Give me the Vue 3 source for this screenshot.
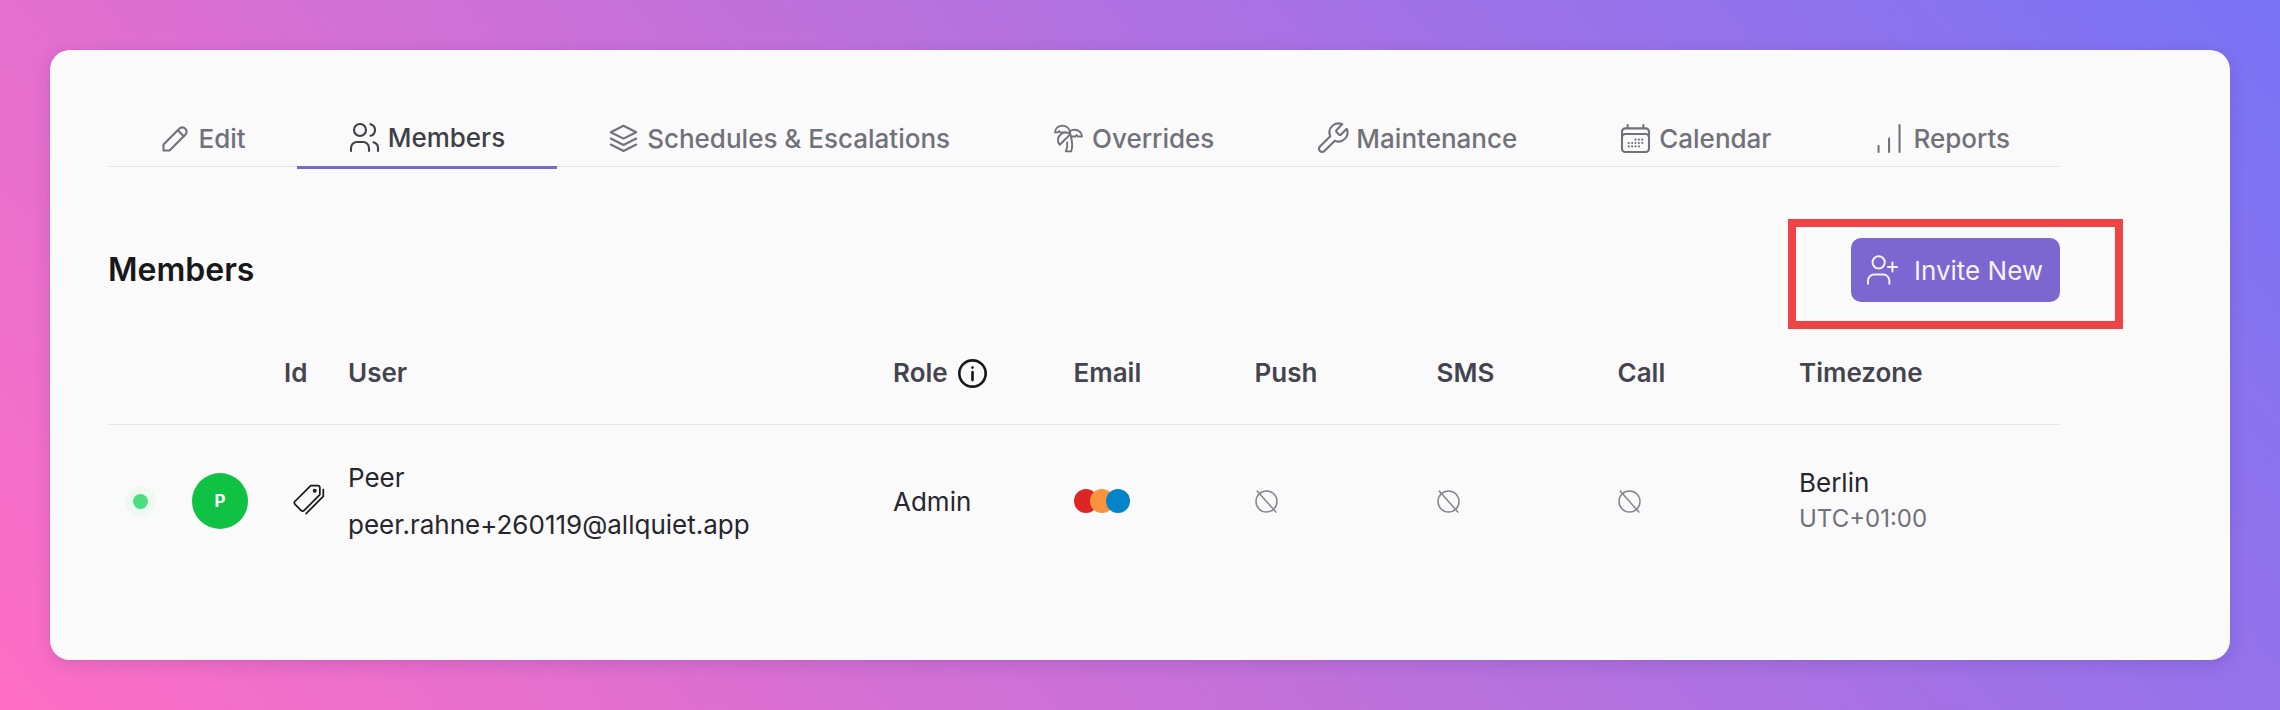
<script setup>
const tabs = [
  { label: 'Edit', icon: 'edit' },
  { label: 'Members', icon: 'users', active: true },
  { label: 'Schedules & Escalations', icon: 'stack' },
  { label: 'Overrides', icon: 'palm' },
  { label: 'Maintenance', icon: 'wrench' },
  { label: 'Calendar', icon: 'calendar' },
  { label: 'Reports', icon: 'bars' },
]

const icons = {
  edit: ['M4 20h4L18.5 9.5a2.83 2.83 0 1 0-4-4L4 16v4', 'M13.5 6.5l4 4'],
  users: ['M5 7a4 4 0 1 0 8 0a4 4 0 1 0-8 0', 'M3 21v-2a4 4 0 0 1 4-4h4a4 4 0 0 1 4 4v2', 'M16 3.13a4 4 0 0 1 0 7.75', 'M21 21v-2a4 4 0 0 0-3-3.85'],
  stack: ['M12 3.5l-8.5 4.3 8.5 4.3 8.5-4.3-8.5-4.3', 'M3.5 12l8.5 4.3 8.5-4.3', 'M3.5 16l8.5 4.3 8.5-4.3'],
  palm: [
    'M13 8c0-2.76-2.46-5-5.5-5S2 5.24 2 8h2l1-1 1 1h4',
    'M13 7.14A5.82 5.82 0 0 1 16.5 6c3.04 0 5.5 2.24 5.5 5h-3l-1-1-1 1h-3',
    'M5.89 9.71c-2.15 2.15-2.3 5.47-.35 7.43l4.24-4.25.7-.7.71-.71 2.12-2.12c-1.95-1.96-5.27-1.8-7.42.35',
    'M11 15.5c.5 2.5-.17 4.5-1 6.5h4c2-5.5-.5-12-1-14',
  ],
  wrench: ['M14.7 6.3a1 1 0 0 0 0 1.4l1.6 1.6a1 1 0 0 0 1.4 0l3.77-3.77a6 6 0 0 1-7.94 7.94l-6.91 6.91a2.12 2.12 0 0 1-3-3l6.91-6.91a6 6 0 0 1 7.94-7.94l-3.76 3.76z'],
  calendar: [
    'M6.75 3v2.25M17.25 3v2.25M3 18.75V7.5a2.25 2.25 0 0 1 2.25-2.25h13.5A2.25 2.25 0 0 1 21 7.5v11.25m-18 0A2.25 2.25 0 0 0 5.25 21h13.5A2.25 2.25 0 0 0 21 18.75m-18 0v-7.5A2.25 2.25 0 0 1 5.25 9h13.5A2.25 2.25 0 0 1 21 11.25v7.5',
    'M12 12.75h.01M12 15h.01M12 17.25h.01M9.75 15h.01M9.75 17.25h.01M7.5 15h.01M7.5 17.25h.01M14.25 12.75h.01M14.25 15h.01M14.25 17.25h.01M16.5 12.75h.01M16.5 15h.01',
  ],
  bars: ['M4.7 21v-4', 'M11.7 21v-9', 'M18.7 21V3'],
  userPlus: ['M6 7a4 4 0 1 0 8 0a4 4 0 1 0-8 0', 'M3 21v-2a4 4 0 0 1 4-4h6a4 4 0 0 1 4 4v2', 'M19 7v6M16 10h6'],
  slash: ['M3 12a9 9 0 1 0 18 0a9 9 0 1 0-18 0', 'M4 3l16 18'],
}

const headers = ['', '', 'Id', 'User', 'Role', 'Email', 'Push', 'SMS', 'Call', 'Timezone']
const channels = ['Push', 'SMS', 'Call']
</script>

<template>
  <div class="page">
    <main class="card">
      <nav class="tabs">
        <a v-for="tab in tabs" :key="tab.label" class="tab" :class="{ active: tab.active }">
          <svg class="tab-icon" :viewBox="tab.icon === 'palm' ? '2 3 20 19' : '3 3 18 18'">
            <path v-for="d in icons[tab.icon]" :key="d" :d="d" />
          </svg>
          {{ tab.label }}
        </a>
      </nav>

      <header class="title-row">
        <h1>Members</h1>
        <div class="invite-wrap">
          <button class="invite">
            <svg class="invite-icon" viewBox="3 3 19 18">
              <path v-for="d in icons.userPlus" :key="d" :d="d" />
            </svg>
            Invite New
          </button>
          <span class="highlight"></span>
        </div>
      </header>

      <div class="table head">
        <div v-for="(h, i) in headers" :key="i" class="th">
          {{ h }}
          <svg v-if="h === 'Role'" class="info" viewBox="1 1 22 22">
            <circle cx="12" cy="12" r="10" />
            <path d="M12 11v6" />
            <circle class="info-dot" cx="12" cy="7.5" r="1" />
          </svg>
        </div>
      </div>

      <div class="table row">
        <div class="status"><span class="status-dot"></span></div>
        <div><span class="avatar">P</span></div>
        <div>
          <svg class="tag" viewBox="3 3 28 28">
            <path d="M18.5 3.5h6a2 2 0 0 1 2 2v6L12.8 25.2a2 2 0 0 1-2.8 0l-5.2-5.2a2 2 0 0 1 0-2.8z" />
            <circle cx="22" cy="8" r="1" />
            <path d="M29.5 7v6L14.5 28" />
          </svg>
        </div>
        <div class="user">
          <div>Peer</div>
          <div>peer.rahne+260119@allquiet.app</div>
        </div>
        <div>Admin</div>
        <div class="dots">
          <span class="red"></span>
          <span class="orange"></span>
          <span class="blue"></span>
        </div>
        <div v-for="c in channels" :key="c">
          <svg class="off" viewBox="3 3 18 18">
            <path v-for="d in icons.slash" :key="d" :d="d" />
          </svg>
        </div>
        <div class="tz">
          <div>Berlin</div>
          <div class="utc">UTC+01:00</div>
        </div>
      </div>
    </main>
  </div>
</template>

<style>
html,
body {
  margin: 0;
}
</style>

<style scoped>
.page {
  box-sizing: border-box;
  width: 2280px;
  height: 710px;
  padding: 50px;
  background: linear-gradient(50deg, #ff6ec4, #7873f5);
  font-family: Inter, 'Liberation Sans', sans-serif;
  overflow: hidden;
}

.card {
  box-sizing: border-box;
  height: 610px;
  padding: 0 170px 0 58px;
  background: #fafafa;
  border-radius: 20px;
  box-shadow: 0 4px 16px rgba(60, 40, 120, 0.18);
}

.tabs {
  display: flex;
  height: 116px;
  align-items: flex-end;
  border-bottom: 1px solid #e4e4e7;
}

.tab {
  display: flex;
  align-items: center;
  gap: 10px;
  box-sizing: border-box;
  height: 50px;
  margin-bottom: -1px;
  padding: 0 51.5px 8px;
  color: #71717a;
  font-size: 26px;
  font-weight: 500;
  white-space: nowrap;
}

.tab.active {
  color: #3f3f46;
  border-bottom: 3px solid #7c66d0;
  margin-bottom: -3px;
  height: 52px;
}

.tab-icon {
  width: 27px;
  height: 27px;
  margin-left: 2px;
  overflow: visible;
  fill: none;
  stroke: currentColor;
  stroke-width: 1.4;
  stroke-linecap: round;
  stroke-linejoin: round;
}

.title-row {
  display: flex;
  justify-content: space-between;
  align-items: center;
  height: 64px;
  margin-top: 71px;
}

h1 {
  margin: -2px 0 0;
  color: #18181b;
  font-size: 32px;
  font-weight: 600;
}

.invite-wrap {
  position: relative;
}

.invite {
  display: flex;
  align-items: center;
  gap: 17px;
  box-sizing: border-box;
  width: 209px;
  height: 64px;
  padding: 0 17px;
  color: #f4f2ff;
  background: #7c66d0;
  border: 0;
  border-radius: 10px;
  font: 400 26px Inter, sans-serif;
  white-space: nowrap;
}

.invite-icon {
  width: 29px;
  height: 28px;
  flex: none;
  overflow: visible;
  fill: none;
  stroke: currentColor;
  stroke-width: 1.3;
  stroke-linecap: round;
  stroke-linejoin: round;
}

.highlight {
  position: absolute;
  top: -19px;
  left: -63px;
  width: 335px;
  height: 110px;
  box-sizing: border-box;
  border: 8px solid #ef4444;
  pointer-events: none;
}

.table {
  display: grid;
  grid-template-columns: 84px 92px 64px 545px 180.5px 181px 182px 181px 181.5px 1fr;
  align-items: center;
}

.head {
  height: 88px;
  margin-top: 34px;
  color: #44444f;
  font-size: 26px;
  font-weight: 600;
  border-bottom: 1px solid #e4e4e7;
}

.th {
  display: flex;
  align-items: center;
  gap: 10px;
  padding-bottom: 16px;
}

.info {
  width: 29px;
  height: 29px;
  margin-top: 3px;
  fill: none;
  stroke: #18181b;
  stroke-width: 2;
  stroke-linecap: round;
}

.info-dot {
  fill: #18181b;
  stroke: none;
}

.row {
  height: 152px;
  color: #26262e;
  font-size: 26px;
}

.row > div {
  display: flex;
  align-items: center;
}

.row > .user,
.row > .tz {
  flex-direction: column;
  align-items: flex-start;
}

.status {
  padding-left: 25px;
}

.status-dot {
  width: 15px;
  height: 15px;
  background: #4ade80;
  border-radius: 50%;
  box-shadow: 0 0 0 8px #eefaf1;
}

.avatar {
  display: flex;
  align-items: center;
  justify-content: center;
  width: 56px;
  height: 56px;
  color: #fff;
  background: #10c244;
  border-radius: 50%;
  font-size: 17px;
  font-weight: 700;
}

.tag {
  width: 32px;
  height: 32px;
  margin-left: 9px;
  overflow: visible;
  fill: none;
  stroke: #18181b;
  stroke-width: 1.5;
  stroke-linecap: round;
  stroke-linejoin: round;
}

.user {
  gap: 14px;
  line-height: 33px;
}

.dots span {
  width: 24px;
  height: 24px;
  margin-right: -8px;
  border-radius: 50%;
}

.red {
  background: #dc2626;
}

.orange {
  background: #fb923c;
}

.blue {
  background: #0284c7;
}

.off {
  width: 21px;
  height: 21px;
  margin-left: 1px;
  overflow: visible;
  fill: none;
  stroke: #85858f;
  stroke-width: 1.3;
  stroke-linecap: round;
}

.tz {
  line-height: 36px;
}

.utc {
  color: #71717a;
  font-size: 24px;
}
</style>
